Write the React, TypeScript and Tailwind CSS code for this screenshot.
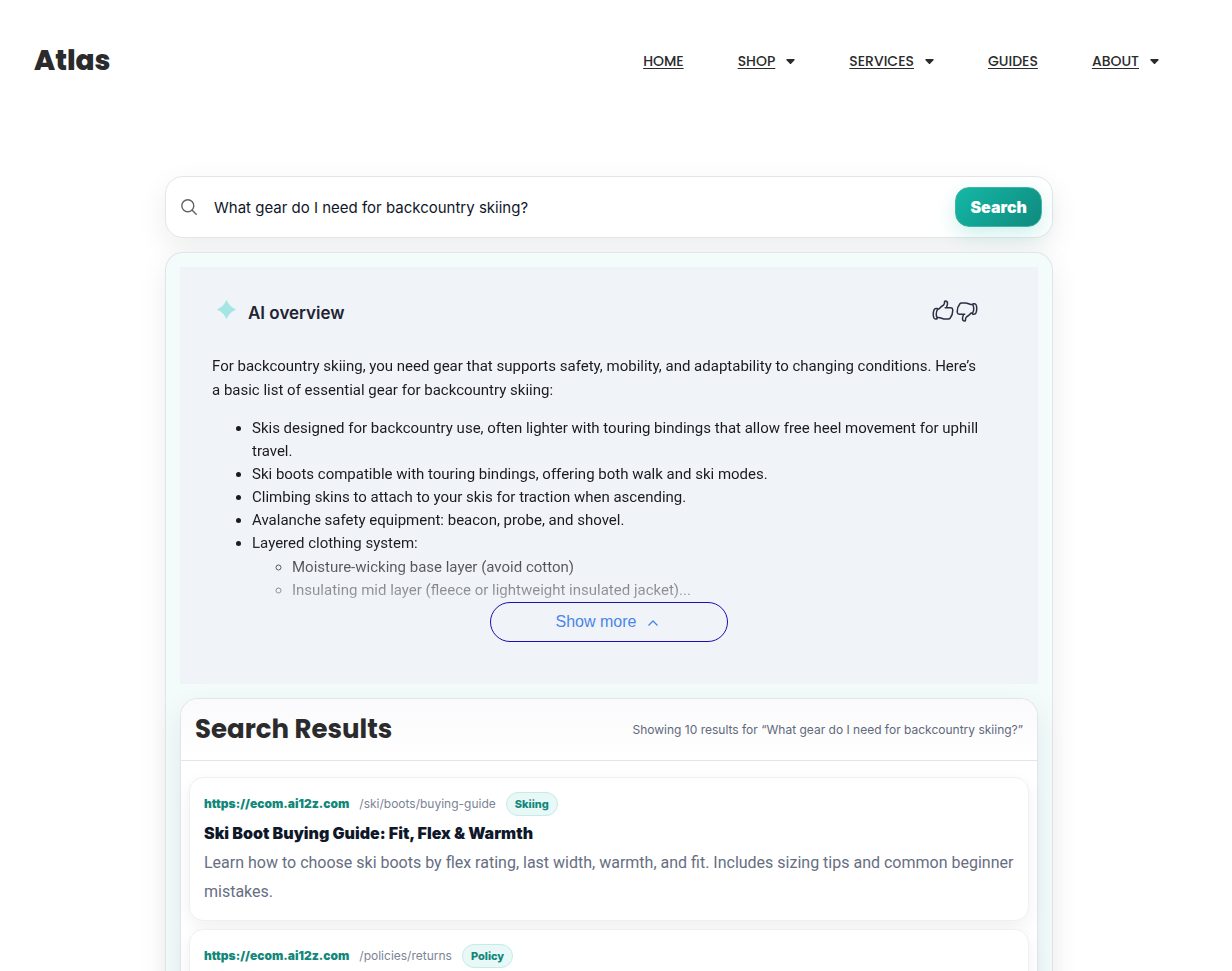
import { HiOutlineHandThumbDown, HiOutlineHandThumbUp } from "react-icons/hi2";

const navItems = [
  { label: "HOME", menu: false },
  { label: "SHOP", menu: true },
  { label: "SERVICES", menu: true },
  { label: "GUIDES", menu: false },
  { label: "ABOUT", menu: true },
];

function Header() {
  return (
    <header className="flex items-center justify-between pt-[37px] pr-[59px] pl-[34px] font-['Poppins','Inter',sans-serif] text-[#2b2b2d]">
      <a href="#home" className="text-[28px] leading-[48px] font-extrabold">
        Atlas
      </a>
      <nav className="flex items-center gap-[54px] text-sm font-medium">
        {navItems.map((item) => (
          <div key={item.label} className="flex items-center gap-[11px]">
            <a href={"#" + item.label.toLowerCase()} className="underline underline-offset-2">
              {item.label}
            </a>
            {item.menu && (
              <svg className="h-[5px] w-[9px]" viewBox="0 0 9 5" fill="currentColor" aria-hidden="true">
                <path d="M1 0h7a.7.7 0 0 1 .5 1.2L5.1 4.7a.8.8 0 0 1-1.2 0L.5 1.2A.7.7 0 0 1 1 0z" />
              </svg>
            )}
          </div>
        ))}
      </nav>
    </header>
  );
}

function SearchBar() {
  return (
    <form
      className="flex h-[62px] items-center rounded-[18px] border border-[#e4e5e8] bg-white pr-[10px] pl-[15px] shadow-[0_10px_30px_rgba(15,23,42,0.08)]"
      onSubmit={(e) => e.preventDefault()}
    >
      <svg className="size-4 shrink-0 text-[#5f6368]" viewBox="0 0 16 16" fill="none" stroke="currentColor" strokeWidth="1.4" strokeLinecap="round" aria-hidden="true">
        <circle cx="6.8" cy="6.8" r="6" />
        <path d="M11.2 11.2 15.2 15.2" />
      </svg>
      <input
        aria-label="Search"
        defaultValue="What gear do I need for backcountry skiing?"
        className="ml-[17px] min-w-0 flex-1 bg-transparent pt-0.5 text-[15px] text-[#0f172a] outline-none"
      />
      <button
        type="submit"
        className="h-10 rounded-[14px] border border-[#42b3a6] bg-linear-135 from-[#14b8a6] to-[#0f8a7e] px-[14px] text-base font-black text-white shadow-[0_8px_20px_rgba(20,184,166,0.2)]"
      >
        Search
      </button>
    </form>
  );
}

function Overview() {
  return (
    <section className="h-[417px] shrink-0 bg-[#f0f3f8] px-8 pt-[30px]">
      <div className="flex h-8 items-center justify-between pr-[27px]">
        <h2 className="flex items-center gap-3 pt-px text-[17px] font-semibold text-[#1f2433]">
          <svg className="mb-2 ml-[5px] size-[19px]" viewBox="0 0 18 18" fill="#a5e5e3" aria-hidden="true">
            <path d="M9 0C10.800 4.200 13.800 7.200 18 9 13.800 10.800 10.800 13.800 9 18 7.200 13.800 4.200 10.800 0 9 4.200 7.200 7.200 4.200 9 0Z" />
          </svg>
          AI overview
        </h2>
        <div className="mb-1 flex text-[#2b2f42]">
          <button type="button" aria-label="Helpful">
            <HiOutlineHandThumbUp className="size-6" />
          </button>
          <button type="button" aria-label="Not helpful">
            <HiOutlineHandThumbDown className="size-6" />
          </button>
        </div>
      </div>
      <div className="mt-[25px] mask-[linear-gradient(to_bottom,black_76%,transparent_112%)] font-['Roboto',sans-serif] text-[15px] text-[#1b1b1f]">
        <p className="pr-6 leading-6">
          For backcountry skiing, you need gear that supports safety, mobility, and adaptability to changing conditions. Here’s a basic list of essential gear for backcountry skiing:
        </p>
        <ul className="mt-[15px] list-disc pl-10 leading-[23px]">
          <li>Skis designed for backcountry use, often lighter with touring bindings that allow free heel movement for uphill travel.</li>
          <li>Ski boots compatible with touring bindings, offering both walk and ski modes.</li>
          <li>Climbing skins to attach to your skis for traction when ascending.</li>
          <li>Avalanche safety equipment: beacon, probe, and shovel.</li>
          <li>
            Layered clothing system:
            <ul className="mt-px list-[circle] pl-10">
              <li>Moisture-wicking base layer (avoid cotton)</li>
              <li>Insulating mid layer (fleece or lightweight insulated jacket)...</li>
            </ul>
          </li>
        </ul>
      </div>
      <button
        type="button"
        className="mx-auto flex h-10 w-[238px] items-center justify-center gap-3 rounded-full border border-[#1a0fb0] font-['Liberation_Sans',sans-serif] text-base text-[#4a86e8]"
      >
        Show more
        <svg className="mt-0.5 mr-1 h-[6px] w-[10px]" viewBox="0 0 10 6" fill="none" stroke="currentColor" strokeWidth="1.3" aria-hidden="true">
          <path d="M.5 5.500 5 1 9.500 5.500" />
        </svg>
      </button>
    </section>
  );
}

type ResultProps = { path: string; tag: string; title?: string; text?: string };

function Result({ path, tag, title, text }: ResultProps) {
  return (
    <article className="min-h-[144px] rounded-[14px] border border-[#eff0f3] bg-white px-[14px] pt-[14px] pb-3 shadow-[0_6px_18px_rgba(15,23,42,0.06)]">
      <div className="flex h-6 items-center gap-[10px] text-xs">
        <a href="#result" className="font-black text-[#12877a]">
          https://ecom.ai12z.com
        </a>
        <span className="text-[#7b8494]">{path}</span>
        <span className="flex h-6 items-center rounded-full border border-[#c5ebe6] bg-[#e7f8f6] px-2 text-[11px] font-extrabold text-[#12877a]">
          {tag}
        </span>
      </div>
      {title && <h3 className="mt-[6px] text-base leading-[22px] font-black text-[#0f172a]">{title}</h3>}
      {text && <p className="mt-1 font-['Roboto',sans-serif] text-base leading-[29px] text-[#666e82]">{text}</p>}
    </article>
  );
}

function Results() {
  return (
    <section className="mt-[14px] flex-1 rounded-t-[18px] border border-b-0 border-[#e2e5e8] bg-white shadow-[0_10px_30px_rgba(15,23,42,0.08)]">
      <div className="flex h-[62px] items-center justify-between rounded-t-[17px] border-b border-[#e4e5e8] bg-linear-to-b from-[#fafafc] to-white px-[14px]">
        <h1 className="font-['Poppins','Inter',sans-serif] text-[26px] font-bold text-[#2b2b2d]">Search Results</h1>
        <p className="text-xs text-[#5f697c]">Showing 10 results for “What gear do I need for backcountry skiing?”</p>
      </div>
      <div className="flex flex-col gap-2 px-2 pt-4">
        <Result
          path="/ski/boots/buying-guide"
          tag="Skiing"
          title="Ski Boot Buying Guide: Fit, Flex & Warmth"
          text="Learn how to choose ski boots by flex rating, last width, warmth, and fit. Includes sizing tips and common beginner mistakes."
        />
        <Result path="/policies/returns" tag="Policy" />
      </div>
    </section>
  );
}

export default function App() {
  return (
    <div className="flex h-screen flex-col overflow-hidden bg-white pr-[14px] font-['Inter',sans-serif]">
      <Header />
      <main className="mx-auto mt-[91px] flex w-full max-w-[888px] flex-1 flex-col">
        <SearchBar />
        <div className="mt-[14px] flex flex-1 flex-col rounded-t-[18px] border border-b-0 border-[#dfe6e8] bg-[#f3fcfb] px-[14px] pt-[14px] shadow-[0_10px_30px_rgba(15,23,42,0.08)]">
          <Overview />
          <Results />
        </div>
      </main>
    </div>
  );
}
